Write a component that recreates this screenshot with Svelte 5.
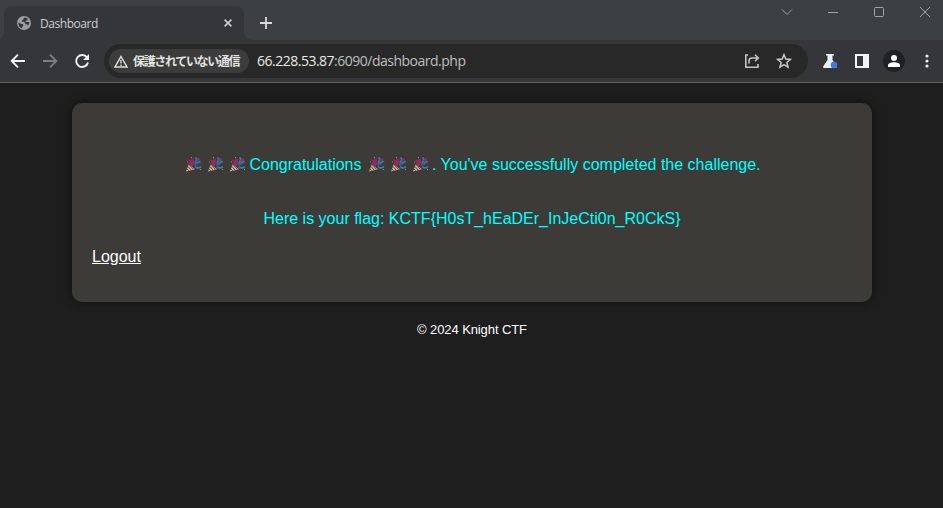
<script>
  const poppers = [0, 1, 2];
</script>

{#snippet popper()}
  <svg class="popper" viewBox="0 0 22 18" aria-hidden="true">
    <path d="M3 16.5 5.8 9.2 12 14.2Z" fill="#cfae8c" />
    <path d="M4.8 11.4 8.3 15.2M4 14 5.8 15.8M6.3 9.8 10.4 14.4" stroke="#555060" stroke-width="1" />
    <path d="M4.5 4.5 8 5.2 8.6 3 10.8 4.5 11 8 9.8 11.5 7 10 5.5 8 7 7Z" fill="#a02362" />
    <path d="M12.5 2.5Q15 4 12 8M11.5 10 17.5 6M12 11.7Q14.5 14 18 11.8" stroke="#2b86ae" stroke-width="1.7" fill="none" />
    <path d="M13.5 6 16.5 3.5" stroke="#a82466" stroke-width="1.8" />
    <path d="M11 8.5 15 9.5" stroke="#315a83" stroke-width="1.3" />
    <path d="M16.5 7.5l1.7.8M12 13l2 .5" stroke="#a82466" stroke-width="1.1" />
    <path d="M8 2h1v1H8zM4 6.5h1v1H4zM17 14h1v1h-1z" fill="#b88657" />
  </svg>
{/snippet}

<div class="browser">
  <div class="tabs">
    <div class="tab">
      <svg class="globe" width="14" height="14" viewBox="0 0 14 14">
        <circle cx="7" cy="7" r="7" fill="#9aa0a6" />
        <path d="M7.8 1.4 6.2 3v1.2H4.8v1.5H7l1.2 1.2v1.4h1.9l.8 1.4c1-1 1.5-2.2 1.4-3.6L10.5 6H8.7V4.4h1.6l.5-1.6A5 5 0 0 0 7.8 1.4ZM1.6 6.2l2.5 1.9h2v2L5 11.3v1.1a5.6 5.6 0 0 1-3.4-6.2Z" fill="#35363a" />
      </svg>
      <span class="title">Dashboard</span>
      <svg class="close" width="8" height="8" viewBox="0 0 8 8" stroke="#d0d2d5" stroke-width="1.5"><path d="M.6.6l6.8 6.8M7.4.6.6 7.4" /></svg>
    </div>
    <svg class="plus" width="12" height="12" viewBox="0 0 12 12" stroke="#d7d9dc" stroke-width="1.8"><path d="M6 0v12M0 6h12" /></svg>
    <div class="window-controls">
      <svg viewBox="0 0 12 12"><path d="M1 3.5 6 8.5 11 3.5" /></svg>
      <svg viewBox="0 0 12 12"><path d="M1 6.5h10" /></svg>
      <svg viewBox="0 0 12 12"><rect x="1.5" y="1.5" width="9" height="9" rx="1" /></svg>
      <svg viewBox="0 0 12 12"><path d="M1 1l10 10M11 1 1 11" /></svg>
    </div>
  </div>

  <div class="toolbar">
    <div class="navigation">
      <svg viewBox="0 0 16 16" stroke="#f1f3f4"><path d="M15 8H2M8 1.7 1.7 8 8 14.3" /></svg>
      <svg viewBox="0 0 16 16" stroke="#7c7e81"><path d="M1 8h13M8 1.7 14.3 8 8 14.3" /></svg>
      <svg viewBox="0 0 16 16" stroke="#f1f3f4"><path d="M13 4.4A6 6 0 1 0 14 9.5" /><path d="M15 1v6H9Z" fill="#f1f3f4" stroke="none" /></svg>
    </div>
    <div class="address">
      <div class="security">
        <svg width="14" height="13" viewBox="0 0 14 13" fill="none" stroke="#dddedc" stroke-width="1.5"><path d="M7 1.5 13 12H1Z" /><path d="M7 4.8v3.7M7 9.5V11" stroke-width="1.3" /></svg>
        <span>保護されていない通信</span>
      </div>
      <div class="url"><span class="host">66.228.53.87</span>:6090/dashboard.php</div>
      <svg class="share" width="16" height="16" viewBox="0 0 16 16" fill="none" stroke="#c2c3c5" stroke-width="1.6"><path d="M4 2H1.8v12.2H14V11M5 10.5V8q0-3 3-3h6M11 1.7 14.3 5 11 8.3" /></svg>
      <svg class="star" width="16" height="16" viewBox="0 0 16 16" fill="none" stroke="#c8c9ca" stroke-width="1.5"><path d="M8 1.7 9.8 6l4.7.4-3.6 3.1 1.1 4.6L8 11.7l-4 2.4 1.1-4.6-3.6-3.1L6.2 6Z" /></svg>
    </div>
    <div class="actions">
      <svg class="flask" width="16" height="16" viewBox="0 0 16 16"><path d="M4 1h8v1.5h-1.5V7l4 6.2c.7 1-.1 1.8-1.2 1.8H2.5c-1.1 0-1.8-1-1.2-1.8L5.5 7V2.5H4Z" fill="#edf1f7" /><circle cx="12" cy="12" r="3.3" fill="#427bdc" /></svg>
      <svg class="panel" width="14" height="14" viewBox="0 0 14 14"><path d="M0 0h14v14H0zM2 2v10h6V2Z" fill="#f1f3f4" fill-rule="evenodd" /></svg>
      <div class="avatar"><svg width="14" height="14" viewBox="0 0 14 14" fill="#fff"><circle cx="7" cy="4" r="3" /><path d="M1 13v-1.8C1 9.2 4 8.2 7 8.2s6 1 6 3V13Z" /></svg></div>
      <svg class="more" width="4" height="14" viewBox="0 0 4 14" fill="#eceded"><circle cx="2" cy="2" r="1.6" /><circle cx="2" cy="7" r="1.6" /><circle cx="2" cy="12" r="1.6" /></svg>
    </div>
  </div>

  <main>
    <section>
      <p class="congrats">{#each poppers as item (item)}{@render popper()}{/each}<span>Congratulations&nbsp;</span>{#each poppers as item (item)}{@render popper()}{/each}<span>. You've successfully completed the challenge.</span></p>
      <p class="flag">Here is your flag: KCTF&#123;H0sT_hEaDEr_InJeCti0n_R0CkS&#125;</p>
      <a href="#logout">Logout</a>
    </section>
    <footer>© 2024 Knight CTF</footer>
  </main>
</div>

<style>
  :global(body) { margin: 0; background: #1e1e1e; }
  * { box-sizing: border-box; }
  svg { display: block; flex: none; }
  .browser { height: 508px; overflow: hidden; background: #1e1e1e; font-family: "Liberation Sans", Arial, sans-serif; }
  .tabs { height: 40px; display: flex; background: #3c4043; padding-left: 4px; }
  .tab { position: relative; width: 240px; height: 34px; margin-top: 6px; padding: 0 12px 0 13px; display: flex; align-items: center; background: #35363a; border-radius: 8px 8px 0 0; }
  .tab::before, .tab::after { content: ""; position: absolute; bottom: 0; width: 8px; height: 8px; }
  .tab::before { left: -8px; background: radial-gradient(circle at 0 0, transparent 7.5px, #35363a 8px); }
  .tab::after { right: -8px; background: radial-gradient(circle at 100% 0, transparent 7.5px, #35363a 8px); }
  .title { margin: 2px 0 0 9px; font: 12px/18px "Open Sans", "Noto Sans", sans-serif; letter-spacing: -.45px; color: #cbcccf; }
  .close { margin-left: auto; }
  .plus { margin: 17px 0 0 16px; }
  .window-controls { display: flex; gap: 34px; margin: 6px 12px 0 auto; }
  .window-controls svg { width: 12px; height: 12px; fill: none; stroke: #a1a3a5; stroke-width: 1; }
  .toolbar { height: 43px; display: flex; align-items: center; background: #35363a; border-bottom: 1px solid #606163; }
  .navigation { display: flex; gap: 16px; margin-left: 10px; }
  .navigation svg { width: 16px; height: 16px; fill: none; stroke-width: 1.9; }
  .address { width: 704px; height: 34px; margin-left: 14px; padding: 0 16px 0 5px; border-radius: 17px; background: #282828; display: flex; align-items: center; }
  .security { width: 140px; height: 24px; border-radius: 12px; padding-left: 5px; display: flex; align-items: center; background: #3c3c3c; color: #e3e3e1; }
  .security span { margin-left: 5px; white-space: nowrap; font: bold 12px/18px "Noto Sans CJK JP", sans-serif; letter-spacing: -1.35px; }
  .url { margin-left: 8px; white-space: nowrap; font: 14px/20px "Open Sans", "Noto Sans", sans-serif; letter-spacing: -.5px; color: #bdbebf; }
  .host { color: #e8e8e6; }
  .share { margin-left: auto; }
  .star { margin-left: 16px; }
  .actions { display: flex; align-items: center; margin-left: 14px; }
  .panel { margin-left: 17px; }
  .avatar { width: 22px; height: 22px; margin-left: 14px; border-radius: 50%; background: #202124; display: grid; place-items: center; }
  .more { margin-left: 20px; }
  main { padding-top: 20px; }
  section { width: 800px; height: 199px; margin: 0 auto 0 72px; padding: 49px 20px 0; border-radius: 10px; background: #3c3b37; box-shadow: 0 0 10px rgb(0 0 0 / 50%); font-size: 16px; line-height: 26px; }
  p { margin: 0; height: 26px; color: #00ffff; white-space: nowrap; display: flex; justify-content: center; }
  .popper { width: 22px; height: 18px; margin-top: 3px; }
  .flag { margin-top: 28px; }
  a { display: block; width: max-content; margin-top: 12px; color: #fff; }
  footer { margin-top: 19px; padding-left: 1px; text-align: center; font-size: 13px; line-height: 18px; letter-spacing: -.1px; color: #fff; }
</style>
